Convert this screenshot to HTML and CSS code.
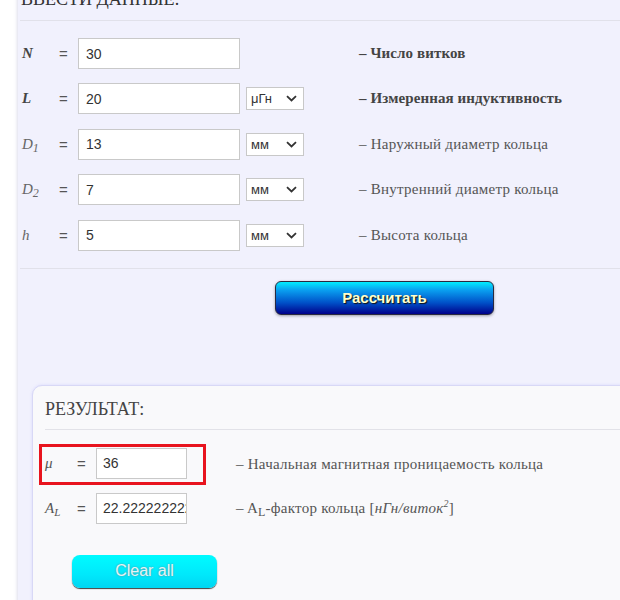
FILE: index.html
```html
<!DOCTYPE html>
<html lang="ru">
<head>
<meta charset="utf-8">
<title>Расчёт кольца</title>
<link rel="stylesheet" href="styles.css">
</head>
<body>
<div class="page">
  <div class="panel">
    <h2 class="heading">Ввести данные:</h2>
    <div class="rows">
      <div class="row">
        <span class="lbl strong">N</span><span class="eq">=</span>
        <div class="field">30</div>
        <span class="unit-space"></span>
        <span class="desc strong-desc">– Число витков</span>
      </div>
      <div class="row">
        <span class="lbl strong">L</span><span class="eq">=</span>
        <div class="field">20</div>
        <div class="unit"><span>μГн</span><svg width="11" height="7" viewBox="0 0 11 7"><path d="M1 1.2 L5.5 5.5 L10 1.2" fill="none" stroke="#333" stroke-width="1.8"/></svg></div>
        <span class="desc strong-desc">– Измеренная индуктивность</span>
      </div>
      <div class="row">
        <span class="lbl">D<sub>1</sub></span><span class="eq">=</span>
        <div class="field">13</div>
        <div class="unit"><span>мм</span><svg width="11" height="7" viewBox="0 0 11 7"><path d="M1 1.2 L5.5 5.5 L10 1.2" fill="none" stroke="#333" stroke-width="1.8"/></svg></div>
        <span class="desc">– Наружный диаметр кольца</span>
      </div>
      <div class="row">
        <span class="lbl">D<sub>2</sub></span><span class="eq">=</span>
        <div class="field">7</div>
        <div class="unit"><span>мм</span><svg width="11" height="7" viewBox="0 0 11 7"><path d="M1 1.2 L5.5 5.5 L10 1.2" fill="none" stroke="#333" stroke-width="1.8"/></svg></div>
        <span class="desc">– Внутренний диаметр кольца</span>
      </div>
      <div class="row">
        <span class="lbl">h</span><span class="eq">=</span>
        <div class="field">5</div>
        <div class="unit"><span>мм</span><svg width="11" height="7" viewBox="0 0 11 7"><path d="M1 1.2 L5.5 5.5 L10 1.2" fill="none" stroke="#333" stroke-width="1.8"/></svg></div>
        <span class="desc">– Высота кольца</span>
      </div>
    </div>
    <div class="actions">
      <button class="calc">Рассчитать</button>
    </div>

    <div class="result">
      <h2 class="res-heading">Результат:</h2>
      <div class="res-row">
        <div class="highlight">
          <span class="rlbl">μ</span><span class="req">=</span>
          <div class="field small">36</div>
        </div>
        <span class="desc res-desc first">– Начальная магнитная проницаемость кольца</span>
      </div>
      <div class="res-row second">
        <span class="rlbl">A<sub>L</sub></span><span class="req">=</span>
        <div class="field small clip">22.2222222222</div>
        <span class="desc res-desc">– A<sub class="up">L</sub>-фактор кольца [<i>нГн/виток<sup>2</sup></i>]</span>
      </div>
      <button class="clear">Clear all</button>
    </div>
  </div>
</div>
</body>
</html>
```

FILE: styles.css
```css
html, body {
  margin: 0;
  padding: 0;
  background: #ffffff;
}

.page {
  width: 620px;
  height: 600px;
  overflow: hidden;
}

.panel {
  width: 720px;
  margin: -11px 0 0 18px;
  background: #f1f1fd;
  box-shadow: -1px 0 3px rgba(180, 180, 210, 0.45);
  padding-bottom: 40px;
  font-family: "Liberation Serif", "DejaVu Serif", serif;
}

.heading {
  margin: 0 0 0 2px;
  padding: 0 0 11px 1px;
  font-size: 18px;
  line-height: 20px;
  font-weight: normal;
  text-transform: uppercase;
  color: #333;
  border-bottom: 1px solid #e1e1ea;
}

.rows {
  margin-top: 17px;
  padding-left: 4px;
  display: flex;
  flex-direction: column;
  gap: 14.4px;
}

.row {
  display: flex;
  align-items: center;
  height: 31px;
}

.lbl {
  width: 37px;
  font-style: italic;
  font-size: 15px;
  color: #666;
}

.lbl.strong {
  font-weight: bold;
  color: #444;
}

.lbl sub {
  font-size: 12px;
  vertical-align: -3px;
  line-height: 0;
}

.eq {
  width: 19px;
  font-family: "Liberation Sans", Arial, sans-serif;
  font-size: 15px;
  color: #555;
}

.field {
  box-sizing: border-box;
  width: 162px;
  height: 31px;
  background: #fff;
  border: 1px solid #c9c9c9;
  padding-left: 7px;
  display: flex;
  align-items: center;
  font-family: "Liberation Sans", Arial, sans-serif;
  font-size: 14px;
  color: #333;
}

.unit-space {
  width: 64px;
}

.unit {
  box-sizing: border-box;
  width: 58px;
  height: 23px;
  margin-left: 6px;
  background: #fff;
  border: 1px solid #c8c8c8;
  display: flex;
  align-items: center;
  justify-content: space-between;
  padding: 0 6px 0 4px;
  font-family: "Liberation Sans", Arial, sans-serif;
  font-size: 13px;
  color: #333;
}

.desc {
  margin-left: 55px;
  font-size: 15px;
  letter-spacing: 0.25px;
  color: #555;
  white-space: nowrap;
}

.desc.strong-desc {
  font-weight: bold;
  color: #444;
  letter-spacing: 0.1px;
}

.actions {
  margin: 17px 0 0 2px;
  border-top: 1px solid #e1e1ea;
  padding: 12px 0 0 255px;
}

.calc {
  width: 219px;
  height: 34px;
  border: 1px solid #2a2a40;
  border-radius: 6px;
  background: linear-gradient(to bottom, #00eeff 0%, #0aa0f0 25%, #0050c8 65%, #00008a 100%);
  box-shadow: 0 1px 3px rgba(0, 0, 0, 0.35);
  color: #ffffcc;
  font-family: "Liberation Sans", Arial, sans-serif;
  font-weight: bold;
  font-size: 15px;
  text-shadow: 1px 1px 1px #111;
  padding: 0;
}

.result {
  margin: 70px 0 0 14px;
  background: #f9f9fb;
  border: 1px solid #d8d8f6;
  border-radius: 10px;
  box-shadow: 0 0 3px rgba(200, 200, 255, 0.6);
  padding: 13px 0 30px 12px;
}

.res-heading {
  margin: 0;
  padding-bottom: 10px;
  font-size: 18px;
  line-height: 20px;
  font-weight: normal;
  text-transform: uppercase;
  color: #444;
  border-bottom: 1px solid #e2e2e8;
}

.res-row {
  display: flex;
  align-items: center;
  margin-top: 14px;
}

.res-row.second {
  margin-top: 8px;
  height: 31px;
}

.highlight {
  box-sizing: border-box;
  height: 41px;
  margin-left: -6px;
  border: 3px solid #e8141e;
  padding: 0 16px 2px 3px;
  display: flex;
  align-items: center;
}

.rlbl {
  width: 32px;
  font-style: italic;
  font-size: 15px;
  color: #555;
}

.rlbl sub {
  font-size: 11px;
  vertical-align: -3px;
  line-height: 0;
}

.req {
  width: 19px;
  font-family: "Liberation Sans", Arial, sans-serif;
  font-size: 15px;
  color: #555;
}

.field.small {
  width: 91px;
  height: 31px;
  padding-left: 6px;
  font-size: 14px;
}

.field.clip {
  overflow: hidden;
  white-space: nowrap;
}

.res-desc {
  margin-left: 49px;
}

.res-desc.first {
  margin-left: 30px;
}

.res-desc sub.up {
  font-size: 12px;
  vertical-align: -3px;
  line-height: 0;
}

.res-desc sup {
  font-size: 10px;
  line-height: 0;
}

.clear {
  display: block;
  margin: 31px 0 0 27px;
  width: 145px;
  height: 33px;
  border: none;
  border-radius: 8px;
  background: linear-gradient(to bottom, #00fbff 0%, #00e8fb 60%, #00d6f2 100%);
  box-shadow: 0 1px 1px rgba(0, 0, 0, 0.75);
  color: #e6f4f6;
  font-family: "Liberation Sans", Arial, sans-serif;
  font-size: 16px;
  text-shadow: 0 0 2px #5a8a95;
  padding: 0;
}
```
